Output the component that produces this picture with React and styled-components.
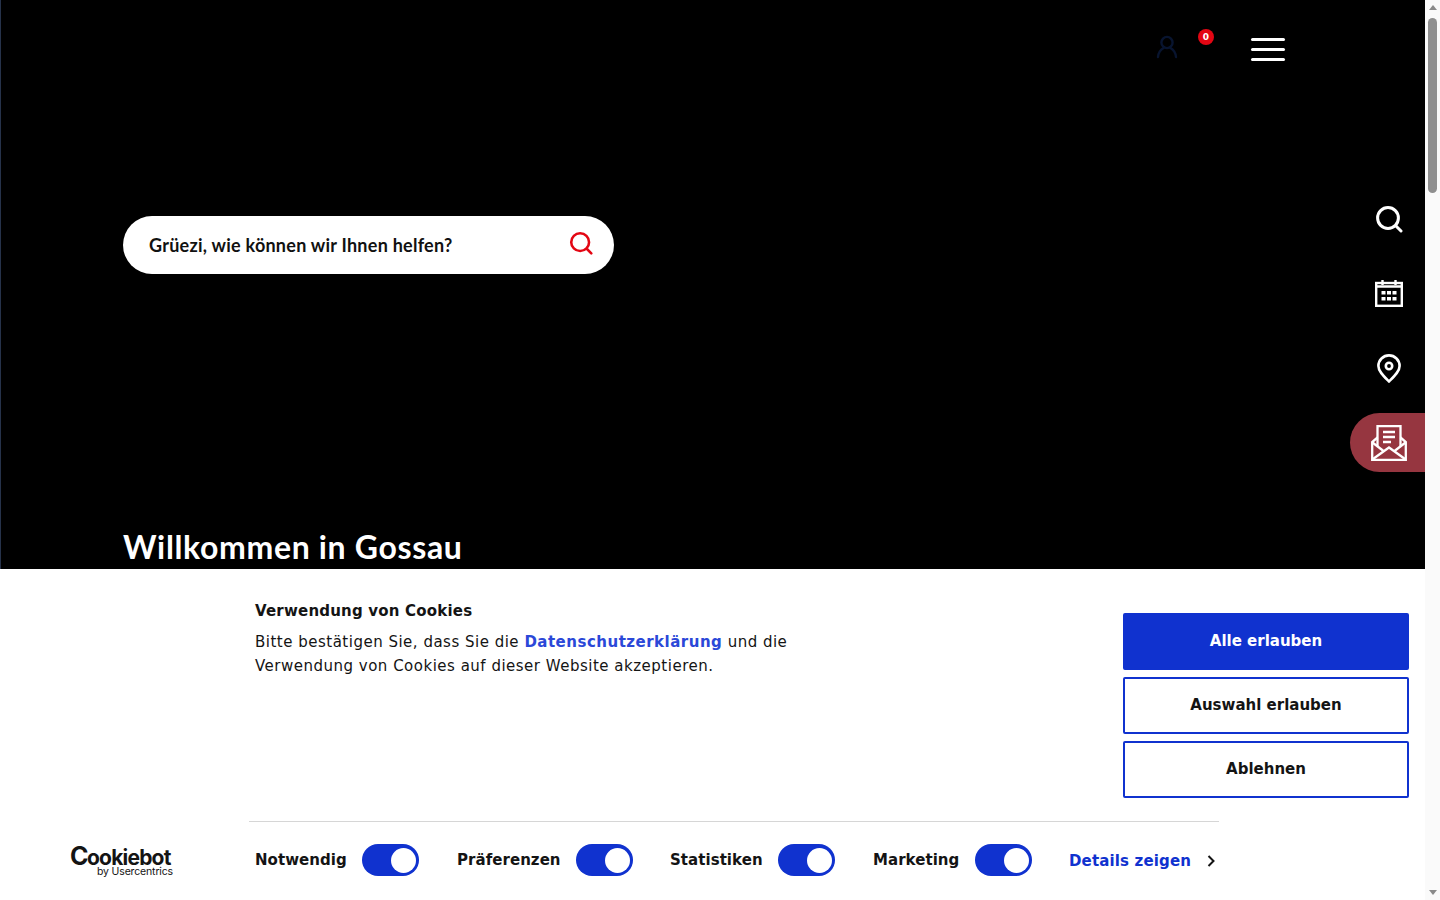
import React from "react";
import styled, { createGlobalStyle } from "styled-components";

const GlobalStyle = createGlobalStyle`
  html, body {
    margin: 0;
    padding: 0;
    height: 100%;
    overflow: hidden;
    background: #fff;
  }
  * {
    box-sizing: border-box;
  }
`;

const consent = [
  { label: "Notwendig", width: 107 },
  { label: "Präferenzen", width: 119 },
  { label: "Statistiken", width: 108 },
  { label: "Marketing", width: 102 },
];

function SearchIcon({ size = 28, color = "#fff" }) {
  return (
    <svg width={size} height={size} viewBox="0 0 28 28" fill="none" stroke={color} strokeWidth="3" strokeLinecap="round">
      <circle cx="13" cy="13" r="10.4" />
      <path d="M21 21 L26 26" />
    </svg>
  );
}

function CalendarIcon() {
  return (
    <svg width="28" height="28" viewBox="0 0 28 28" fill="none" stroke="#fff" strokeWidth="2.4">
      <rect x="1.2" y="3" width="25.6" height="22.8" />
      <path d="M7.5 0 V5 M20.5 0 V5 M1 6.5 H27" />
      <g fill="#fff" stroke="none">
        <rect x="6.5" y="11" width="4" height="3.5" />
        <rect x="12" y="11" width="4" height="3.5" />
        <rect x="17.5" y="11" width="4" height="3.5" />
        <rect x="6.5" y="17" width="4" height="3.5" />
        <rect x="12" y="17" width="4" height="3.5" />
        <rect x="17.5" y="17" width="4" height="3.5" />
      </g>
    </svg>
  );
}

function PinIcon() {
  return (
    <svg width="24" height="29" viewBox="0 0 24 29" fill="none" stroke="#fff" strokeWidth="2.6" strokeLinejoin="round">
      <path d="M12 27.5 C7 22.5 1.4 17.5 1.4 12 A10.6 10.6 0 0 1 22.6 12 C22.6 17.5 17 22.5 12 27.5 Z" />
      <circle cx="12" cy="12" r="3.2" />
    </svg>
  );
}

function MailIcon() {
  return (
    <svg width="36" height="36" viewBox="0 0 36 36" fill="none" stroke="#fff" strokeWidth="2.3">
      <path d="M6.5 12.5 L1.2 17 V34.8 H34.8 V17 L29.5 12.5" />
      <path d="M6.5 21 V1.2 H29.5 V21" />
      <path d="M1.5 17.5 L12.5 26 M34.5 17.5 L23.5 26 M2 34 L18 22.5 L34 34" />
      <path d="M12 7 H24 M12 12 H24 M12 17 H20" />
    </svg>
  );
}

function UserIcon() {
  return (
    <svg width="22" height="24" viewBox="0 0 22 24" fill="none" stroke="#08142f" strokeWidth="2.4" strokeLinecap="round">
      <circle cx="11" cy="7.5" r="5.6" />
      <path d="M2 22 C2.5 16.5 5 14.5 7.5 13 M20 22 C19.5 16.5 17 14.5 14.5 13" />
    </svg>
  );
}

export default function App() {
  return (
    <Page>
      <GlobalStyle />
      <Main>
        <Hero>
          <TopBar>
            <UserSlot>
              <UserIcon />
            </UserSlot>
            <CartBadge>0</CartBadge>
            <Burger>
              <span />
              <span />
              <span />
            </Burger>
          </TopBar>
          <HeroBody>
            <HeroLeft>
              <SearchPill>
                <SearchLabel>Grüezi, wie können wir Ihnen helfen?</SearchLabel>
                <SearchIcon size={24} color="#e30613" />
              </SearchPill>
              <Welcome>Willkommen in Gossau</Welcome>
            </HeroLeft>
            <Rail>
              <RailItem>
                <SearchIcon />
              </RailItem>
              <RailItem>
                <CalendarIcon />
              </RailItem>
              <RailItem>
                <PinIcon />
              </RailItem>
              <NewsletterTab>
                <MailIcon />
              </NewsletterTab>
            </Rail>
          </HeroBody>
        </Hero>
        <Banner>
          <BannerTop>
            <Intro>
              <IntroTitle>Verwendung von Cookies</IntroTitle>
              <IntroText>
                Bitte bestätigen Sie, dass Sie die <IntroLink>Datenschutzerklärung</IntroLink> und die Verwendung von
                Cookies auf dieser Website akzeptieren.
              </IntroText>
            </Intro>
            <Actions>
              <ActionButton $primary>Alle erlauben</ActionButton>
              <ActionButton>Auswahl erlauben</ActionButton>
              <ActionButton>Ablehnen</ActionButton>
            </Actions>
          </BannerTop>
          <Divider />
          <BannerBottom>
            <Logo>
              <LogoName>
                <LogoInitial>C</LogoInitial>ookiebot
              </LogoName>
              <LogoSub>by Usercentrics</LogoSub>
            </Logo>
            <Toggles>
              {consent.map((item) => (
                <ToggleGroup key={item.label}>
                  <ToggleLabel style={{ width: item.width }}>{item.label}</ToggleLabel>
                  <Toggle />
                </ToggleGroup>
              ))}
              <DetailsLink>Details zeigen</DetailsLink>
              <Chevron viewBox="0 0 8 12" fill="none" stroke="#141414" strokeWidth="2">
                <path d="M1.5 1 L6.5 6 L1.5 11" />
              </Chevron>
            </Toggles>
          </BannerBottom>
        </Banner>
      </Main>
      <Scrollbar>
        <ScrollArrow />
        <ScrollThumb />
        <ScrollArrow $down />
      </Scrollbar>
    </Page>
  );
}

const Page = styled.div`
  width: 1440px;
  height: 900px;
  display: flex;
  overflow: hidden;
  font-family: "DejaVu Sans", sans-serif;
`;

const Main = styled.div`
  width: 1425px;
  display: flex;
  flex-direction: column;
`;

const Hero = styled.section`
  height: 569px;
  background: #000;
  border-left: 1px solid #26324a;
  display: flex;
  flex-direction: column;
  overflow: hidden;
`;

const TopBar = styled.header`
  height: 216px;
  display: flex;
  justify-content: flex-end;
  align-items: flex-start;
  padding: 28px 140px 0 0;
`;

const UserSlot = styled.div`
  height: 24px;
  margin-top: 7px;
`;

const CartBadge = styled.div`
  width: 16px;
  height: 16px;
  margin: 1px 0 0 20px;
  border-radius: 50%;
  background: #e30613;
  color: #fff;
  font: 700 9px/16px "DejaVu Sans", sans-serif;
  text-align: center;
`;

const Burger = styled.div`
  width: 34px;
  margin: 10px 0 0 37px;
  display: flex;
  flex-direction: column;
  gap: 7px;

  span {
    height: 3px;
    background: #fff;
    border-radius: 2px;
  }
`;

const HeroBody = styled.div`
  flex: 1;
  display: flex;
  justify-content: space-between;
`;

const HeroLeft = styled.div`
  padding-left: 122px;
`;

const SearchPill = styled.div`
  width: 491px;
  height: 58px;
  padding: 0 21px 5px 26px;
  border-radius: 29px;
  background: #fff;
  display: flex;
  align-items: center;
  justify-content: space-between;
`;

const SearchLabel = styled.span`
  position: relative;
  top: 2px;
  font: 700 18px/24px Lato, sans-serif;
  letter-spacing: 0.25px;
  color: #111;
`;

const Welcome = styled.h1`
  margin: 253px 0 0;
  font: 700 32px/40px Lato, sans-serif;
  letter-spacing: 0.65px;
  color: #fff;
`;

const Rail = styled.nav`
  width: 75px;
  margin-top: -35px;
  display: flex;
  flex-direction: column;
  align-items: flex-end;
`;

const RailItem = styled.div`
  width: 75px;
  height: 75px;
  padding-left: 2px;
  display: flex;
  align-items: center;
  justify-content: center;
`;

const NewsletterTab = styled.div`
  width: 75px;
  height: 59px;
  margin-top: 7px;
  padding-left: 21px;
  border-radius: 30px 0 0 30px;
  background: #963640;
  display: flex;
  align-items: center;
`;

const Banner = styled.section`
  height: 331px;
  background: #fff;
  color: #141414;
`;

const BannerTop = styled.div`
  height: 252px;
  padding: 32px 16px 0 255px;
  display: flex;
  justify-content: space-between;
`;

const Intro = styled.div`
  width: 560px;
`;

const IntroTitle = styled.h2`
  margin: 0 0 9px;
  font-size: 15px;
  line-height: 20px;
  font-weight: 700;
  letter-spacing: 0.2px;
`;

const IntroText = styled.p`
  margin: 0;
  font-size: 15px;
  line-height: 24px;
  letter-spacing: 0.5px;
`;

const IntroLink = styled.span`
  font-weight: 700;
  color: #2b48d8;
`;

const Actions = styled.div`
  width: 286px;
  padding-top: 12px;
  display: flex;
  flex-direction: column;
  gap: 7px;
`;

const ActionButton = styled.button`
  height: 57px;
  padding: 0 0 1px;
  border: 2px solid #1032cf;
  border-radius: 2px;
  background: ${(p) => (p.$primary ? "#1032cf" : "#fff")};
  color: ${(p) => (p.$primary ? "#fff" : "#141414")};
  font: 700 15px/20px "DejaVu Sans", sans-serif;
  letter-spacing: 0;
`;

const Divider = styled.div`
  width: 970px;
  height: 1px;
  margin-left: 249px;
  background: #d6d6d6;
`;

const BannerBottom = styled.div`
  padding-top: 22px;
  display: flex;
  align-items: flex-start;
`;

const Logo = styled.div`
  width: 255px;
  padding: 2px 0 0 70px;
  color: #141414;
`;

const LogoName = styled.div`
  width: 103px;
  height: 20px;
  white-space: nowrap;
  font: 700 21px/20px Inter, sans-serif;
  letter-spacing: -0.8px;
`;

const LogoInitial = styled.span`
  font-size: 25px;
  letter-spacing: -1.5px;
`;

const LogoSub = styled.div`
  width: 103px;
  text-align: right;
  font: 400 10.5px/11px Inter, sans-serif;
  letter-spacing: -0.15px;
`;

const Toggles = styled.div`
  height: 32px;
  display: flex;
  align-items: center;
`;

const ToggleGroup = styled.div`
  display: flex;
  align-items: center;
  margin-right: 38px;

  &:nth-child(2) {
    margin-right: 37px;
  }
`;

const ToggleLabel = styled.span`
  font-size: 15px;
  font-weight: 700;
  letter-spacing: 0.05px;
  white-space: nowrap;
`;

const Toggle = styled.span`
  position: relative;
  width: 57px;
  height: 32px;
  border-radius: 16px;
  background: #1032cf;

  &::after {
    content: "";
    position: absolute;
    top: 4px;
    right: 3px;
    width: 25px;
    height: 25px;
    border-radius: 50%;
    background: #fff;
  }
`;

const DetailsLink = styled.span`
  width: 138px;
  margin: 2px 0 0 -1px;
  font-size: 15px;
  font-weight: 700;
  letter-spacing: 0.15px;
  color: #1032cf;
  white-space: nowrap;
`;

const Chevron = styled.svg`
  width: 8px;
  height: 12px;
  margin-top: 2px;
`;

const Scrollbar = styled.div`
  width: 15px;
  height: 900px;
  background: #fafafa;
  display: flex;
  flex-direction: column;
  align-items: center;
`;

const ScrollArrow = styled.div`
  width: 0;
  height: 0;
  margin: 5px 0 ${(p) => (p.$down ? "5px" : "8px")};
  border-left: 4px solid transparent;
  border-right: 4px solid transparent;
  ${(p) => (p.$down ? "border-top: 5px solid #8a8a8a;" : "border-bottom: 5px solid #8a8a8a;")}
`;

const ScrollThumb = styled.div`
  width: 9px;
  height: 175px;
  margin-bottom: auto;
  border-radius: 5px;
  background: #8f8f8f;
`;
